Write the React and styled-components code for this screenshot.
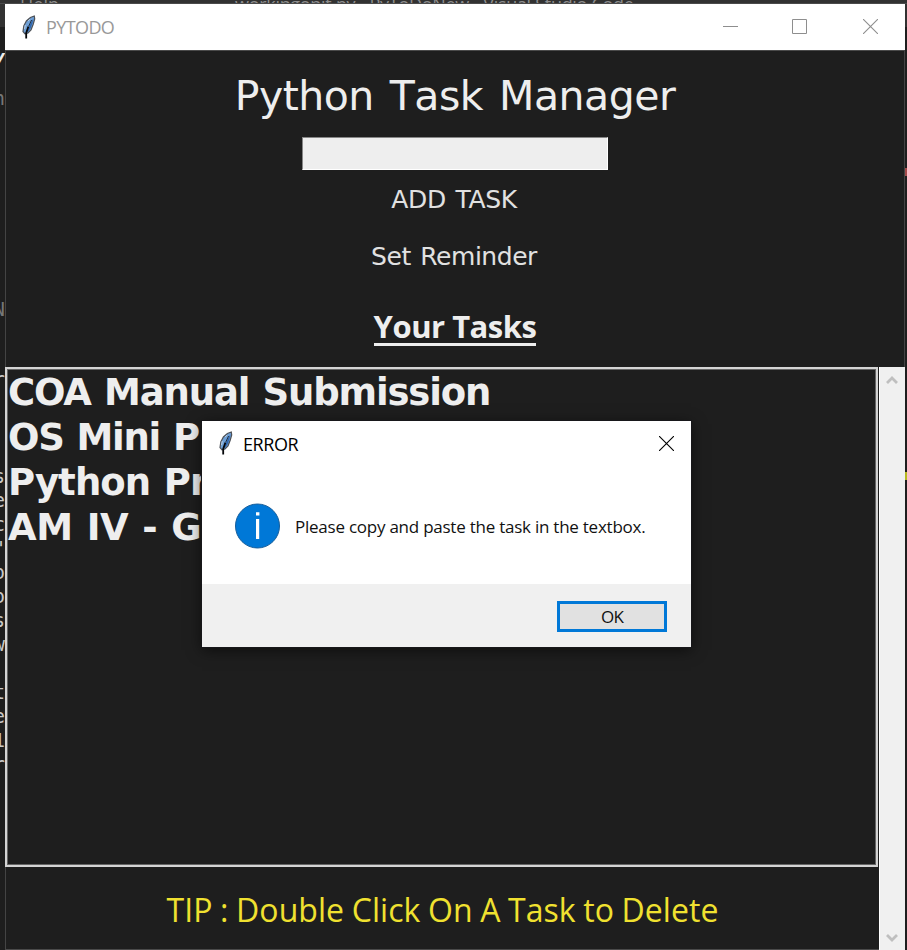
import React from "react";
import styled, { createGlobalStyle } from "styled-components";

const GlobalStyle = createGlobalStyle`
  * { box-sizing: border-box; }
  body { margin: 0; background: #1e1e1e; overflow: hidden; }
`;

const verdana = `Verdana, "DejaVu Sans", sans-serif`;
const humanist = `"Open Sans", sans-serif`;
const segoe = `"Segoe UI", "Open Sans", sans-serif`;

const Desktop = styled.div`
  width: 907px;
  height: 950px;
  display: grid;
  grid-template: 4px 946px / 5px 900px 2px;
  background: #1e1e1e;
  overflow: hidden;
`;

const EditorTitle = styled.div`
  grid-column: 1 / -1;
  display: flex;
  height: 4px;
  overflow: hidden;
  background: #323232;
  border-bottom: 1px solid #4a4a4a;
  color: #8d8d8d;
  font: 18px/22px ${segoe};
  white-space: nowrap;
`;

const EditorLabel = styled.span`
  flex: none;
  width: ${(p) => p.$width}px;
  padding-left: ${(p) => p.$indent}px;
  margin-top: -7px;
  letter-spacing: ${(p) => p.$spacing || 0}px;
`;

const Gutter = styled.div`
  display: flex;
  flex-direction: column;
  align-items: flex-end;
  overflow: hidden;
  background: linear-gradient(#323232 0 23px, #1e1e1e 23px);
`;

const GutterGlyph = styled.span`
  flex: none;
  height: 24px;
  margin-top: ${(p) => p.$gap}px;
  color: ${(p) => p.$color || "#c8c8c8"};
  font: ${(p) => (p.$bold ? "bold italic" : "normal")} 19px/24px "DejaVu Sans Mono", monospace;
`;

const EdgeMark = styled.i`
  flex: none;
  width: 2px;
  height: 8px;
  margin-top: ${(p) => p.$gap}px;
  background: ${(p) => p.$color};
`;

const Window = styled.main`
  display: flex;
  flex-direction: column;
  height: 946px;
  background: #1e1e1e;
`;

const TitleBar = styled.header`
  flex: none;
  display: flex;
  align-items: center;
  height: ${(p) => p.$height}px;
  padding-left: 16px;
  background: #fff;
  color: ${(p) => p.$color};
`;

const TitleText = styled.span`
  flex: 1;
  margin-left: ${(p) => p.$gap}px;
  padding-top: ${(p) => p.$drop || 0}px;
  font: ${(p) => p.$weight} 18px/24px ${segoe};
  letter-spacing: ${(p) => p.$spacing}px;
`;

const WindowControls = styled.div`
  display: flex;
  gap: 54px;
  padding: 0 27px 1px 0;

  svg:last-child { margin-left: 2px; }
`;

const Controls = styled.section`
  flex: none;
  display: flex;
  flex-direction: column;
  align-items: center;
  height: 317px;
  border-top: 1px solid #4a4a4a;
  border-left: 1px solid #444;
  border-right: 1px solid #444;
  color: #eee;
`;

const Heading = styled.h1`
  margin: 20px 0 0;
  font: 400 41px/50px ${verdana};
  font-kerning: none;
  letter-spacing: -0.5px;
  word-spacing: 3.5px;
`;

const TaskInput = styled.input`
  width: 306px;
  height: 33px;
  margin-top: 16px;
  padding: 0 4px;
  border: 1px solid;
  border-color: #868686 #fff #fff #868686;
  outline: 0;
  border-radius: 0;
  background: #eee;
`;

const TextButton = styled.button`
  height: 32px;
  margin-top: ${(p) => p.$gap}px;
  padding: 0 2px 0 0;
  border: 0;
  background: none;
  color: #e1e1e1;
  font: 25px/32px ${verdana};
  letter-spacing: ${(p) => p.$spacing}px;
  word-spacing: 2px;
`;

const ListTitle = styled.h2`
  display: flex;
  margin: 39px 0 0;
  height: 34px;
  border-bottom: 3px solid #eee;
  font: 700 31px/28px ${humanist};
  letter-spacing: -0.5px;
`;

const Lower = styled.section`
  display: grid;
  grid-template: 500px 83px / 874px 26px;
`;

const TaskList = styled.ul`
  width: 873px;
  margin: 0;
  padding: 1px 0 0 1px;
  list-style: none;
  border: 2px solid #d4d4d4;
  outline: 1px solid #666;
  outline-offset: -3px;
  color: #eee;
  font: 700 37px/45px ${verdana};
`;

const Task = styled.li`
  height: 45px;
  white-space: nowrap;
  letter-spacing: ${(p) => p.$spacing}px;
  word-spacing: 1.5px;
`;

const ScrollBar = styled.div`
  grid-row: 1 / 3;
  grid-column: 2;
  display: flex;
  flex-direction: column;
  justify-content: space-between;
  align-items: center;
  padding: 8px 1px 7px 0;
  background: #f0f0f0;
  border-left: 1px solid #fff;
`;

const Tip = styled.footer`
  display: flex;
  align-items: center;
  justify-content: center;
  padding-top: 3px;
  border-left: 1px solid #444;
  border-bottom: 1px solid #4a4a4a;
  color: #f0e130;
  font: 400 32px/40px ${humanist};
  letter-spacing: 0.05px;
  word-spacing: -0.8px;
`;

const Dialog = styled.div`
  position: absolute;
  left: 202px;
  top: 421px;
  width: 489px;
  height: 226px;
  display: flex;
  flex-direction: column;
  background: #fff;
  color: #111;
  box-shadow: 0 0 0 1px #17171a, 0 3px 14px rgba(0, 0, 0, 0.6);
`;

const DialogClose = styled.div`
  display: flex;
  padding: 1px 17px 0 0;
`;

const DialogBody = styled.div`
  flex: 1;
  display: flex;
  align-items: center;
  gap: 15px;
  padding: 2px 0 0 33px;
  font: 17px/24px ${segoe};
`;

const Message = styled.p`
  margin: 3px 0 0;
  white-space: nowrap;
  letter-spacing: -0.24px;
`;

const DialogFooter = styled.div`
  height: 63px;
  display: flex;
  justify-content: flex-end;
  align-items: center;
  padding: 2px 24px 0 0;
  background: #f0f0f0;
`;

const OkButton = styled.button`
  width: 110px;
  height: 31px;
  padding: 0;
  border: 3px solid #0078d7;
  background: #e1e1e1;
  color: #111;
  font: 17px/24px ${segoe};
  letter-spacing: -0.7px;
`;

const Feather = () => (
  <svg width="16" height="25" viewBox="0 0 16 25">
    <path d="M13.3 1 9.4 2.5 5.4 6 2.8 11 2 16.6l2 2.3L7 18l3-3.2 2.2-5.6L13.7 4z" fill="#6fa0d6" stroke="#4d5157" strokeWidth="1.2" />
    <path d="M12.6 3 9.8 8 7.5 13l-1.6 4.2 1.5-.7 2.3-3.5 1.8-5z" fill="#2f66ae" />
    <path d="M10.6 5 7.8 11" fill="none" stroke="#1d2c40" strokeWidth="1" />
    <path d="M7.4 11.5 5.2 18v5.5" fill="none" stroke="#05070a" strokeWidth="1.8" />
    <path d="M4.3 10 3.5 14M7 6l2-1.8" fill="none" stroke="#b8cbe0" />
  </svg>
);

const Cross = ({ color }) => (
  <svg width="15" height="15" viewBox="0 0 15 15">
    <path d="m0 0 15 15m0-15L0 15" stroke={color} strokeWidth="1.1" />
  </svg>
);

const Minimize = () => (
  <svg width="15" height="15" viewBox="0 0 15 15">
    <path d="M0 7.5h15" stroke="#8e8e8e" />
  </svg>
);

const Maximize = () => (
  <svg width="15" height="15" viewBox="0 0 15 15">
    <path d="M.5.5h14v14H.5z" fill="none" stroke="#8e8e8e" />
  </svg>
);

const Chevron = ({ down }) => (
  <svg width="12" height="10" viewBox="0 0 12 10">
    <path d={down ? "m1 2 5 5 5-5" : "m1 8 5-5 5 5"} fill="none" stroke="#bfbfbf" strokeWidth="2.8" />
  </svg>
);

const InfoIcon = () => (
  <svg width="45" height="46" viewBox="0 0 45 46">
    <circle cx="22.5" cy="23" r="22" fill="#0078d7" stroke="#175e9b" />
    <path d="M21 9.2h3.4v3.3H21zM21 16h3.2v20H21z" fill="#fff" />
  </svg>
);

const glyphs = [
  ["y", 41, "#eee", true],
  ["n", 17, "#777"],
  ["N", 187, "#777"],
  ["r", 46],
  ["s", 73],
  ["e", 0],
  ["c", 0],
  ['"', 0],
  ["o", 0],
  ["o", 0],
  ["s", 0],
  ["w", 0],
  ["t", 24],
  ["e", 0],
  ["1", 0],
  ["r", 0],
];

const tasks = [
  ["COA Manual Submission", -1.15],
  ["OS Mini Project", -1.3],
  ["Python Project", -0.9],
  ["AM IV - Graphs", -0.4],
];

export default function App() {
  return (
    <>
      <GlobalStyle />
      <Desktop>
        <EditorTitle>
          <EditorLabel $width={235} $indent={20}>Help</EditorLabel>
          <EditorLabel $width={420} $indent={0} $spacing={-0.3}>workingonit.py - PyToDoNew - Visual Studio Code</EditorLabel>
        </EditorTitle>
        <Gutter>
          {glyphs.map(([text, gap, color, bold], i) => (
            <GutterGlyph key={i} $gap={gap} $color={color} $bold={bold}>{text}</GutterGlyph>
          ))}
        </Gutter>
        <Window>
          <TitleBar $height={46} $color="#999">
            <Feather />
            <TitleText $gap={9} $weight={400} $spacing={-0.6}>PYTODO</TitleText>
            <WindowControls>
              <Minimize />
              <Maximize />
              <Cross color="#8e8e8e" />
            </WindowControls>
          </TitleBar>
          <Controls>
            <Heading>Python Task Manager</Heading>
            <TaskInput />
            <TextButton $gap={14} $spacing={-0.35}>ADD TASK</TextButton>
            <TextButton $gap={25} $spacing={-0.45}>Set Reminder</TextButton>
            <ListTitle>Your Tasks</ListTitle>
          </Controls>
          <Lower>
            <TaskList>
              {tasks.map(([name, spacing]) => <Task key={name} $spacing={spacing}>{name}</Task>)}
            </TaskList>
            <ScrollBar>
              <Chevron />
              <Chevron down />
            </ScrollBar>
            <Tip>TIP : Double Click On A Task to Delete</Tip>
          </Lower>
        </Window>
        <Gutter>
          <EdgeMark $gap={164} $color="#a34a4a" />
          <EdgeMark $gap={296} $color="#b5b81e" />
        </Gutter>
      </Desktop>
      <Dialog role="dialog">
        <TitleBar $height={44} $color="#000">
          <Feather />
          <TitleText $gap={9} $weight={400} $spacing={-0.4} $drop={2}>ERROR</TitleText>
          <DialogClose><Cross color="#000" /></DialogClose>
        </TitleBar>
        <DialogBody>
          <InfoIcon />
          <Message>Please copy and paste the task in the textbox.</Message>
        </DialogBody>
        <DialogFooter><OkButton>OK</OkButton></DialogFooter>
      </Dialog>
    </>
  );
}
